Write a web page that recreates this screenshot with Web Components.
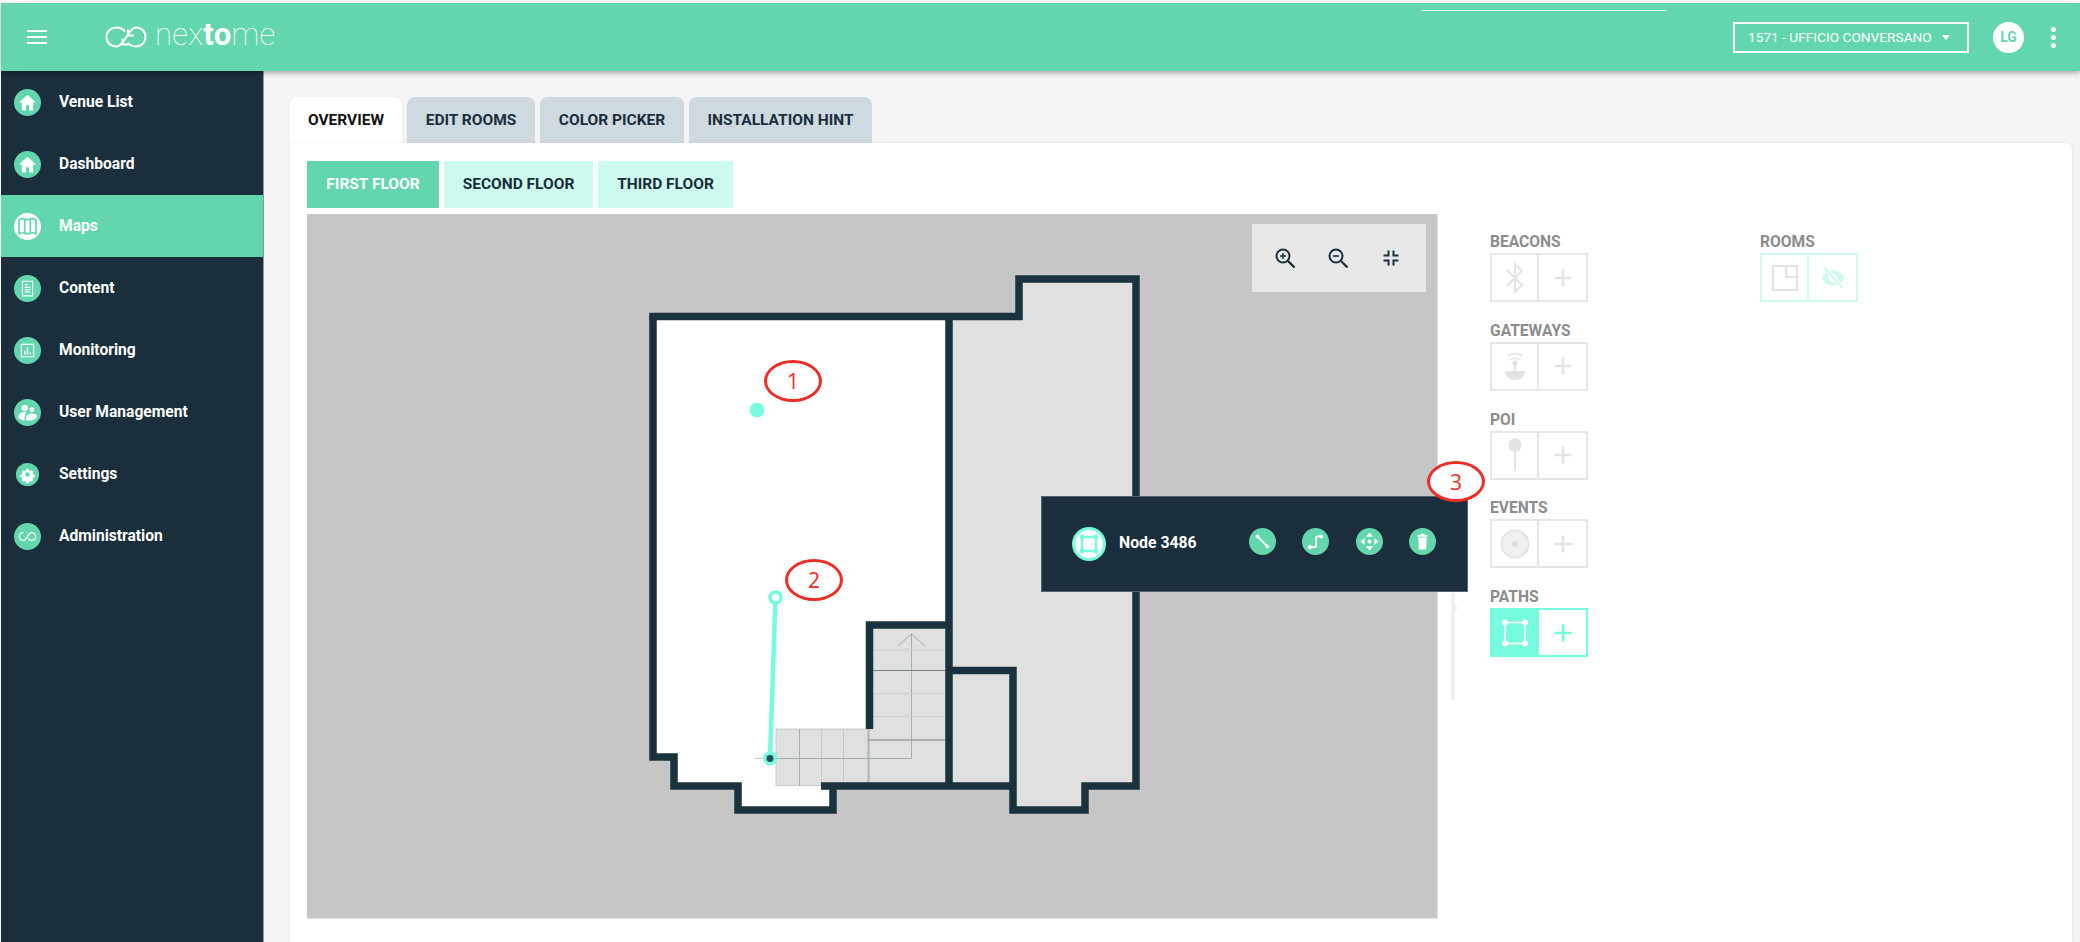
<!DOCTYPE html>
<html>
<head>
<meta charset="utf-8">
<title>Nextome</title>
<style>
  html, body { margin: 0; height: 100%; background: #fff; overflow: hidden; }
  body { font-family: Roboto, "Liberation Sans", sans-serif; }
</style>
</head>
<body>
<nx-app></nx-app>

<script>
/* colours used all over the page */
const GREEN = "#63d6ad";
const DARK = "#1a2e3b";
const WALL = "#1a323d";
const AQUA = "#76fbdf";

/* white glyphs for the round buttons, all in a 24x24 box */
const GLYPHS = {
  home: '<path d="M12 5 4.5 12H7v7h3.6v-4.6h2.8V19H17v-7h2.5z" fill="#fff"/>',
  maps: '<path d="M4.5 6c2.500-1.200 4.700-1.200 6 0 1-.6 2-.6 3 0 1.300-1.200 3.500-1.200 6 0v12.500c-2.500-1.200-4.700-1.200-6 0-1-.6-2-.6-3 0-1.300-1.200-3.500-1.200-6 0z" fill="none" stroke="currentColor" stroke-width="1.500"/><path d="M9.500 6v12M14.500 6v12" stroke="currentColor" stroke-width="1.500"/>',
  content: '<path d="M7.5 5.5h9v13h-9z" fill="none" stroke="#fff" stroke-width="1"/><path d="M9.5 8.5h3M9.500 11h5M9.500 13h5M9.500 15h5" stroke="#fff" stroke-width="1"/>',
  monitoring: '<path d="M6.5 6.5h11v11h-11z" fill="none" stroke="#fff" stroke-width="1"/><path d="M9.500 12v3.500M12 9v6.500M14.500 13.500v2" stroke="#fff" stroke-width="1.300"/>',
  users: '<circle cx="9.500" cy="8" r="2.800" fill="#fff"/><circle cx="16" cy="9.500" r="2.200" fill="#fff"/><path d="M3.800 16c0-2.800 2.600-4.500 5.400-4.500.9 0 1.700.2 2.400.5-1.400 1-2.200 2.500-2.200 4.500v2.800c-2.700-.3-4.800-1.200-5.600-2.800z" fill="#fff"/><path d="M10.700 19v-2.500c0-2.200 2.400-3.700 5.300-3.700s4.600 1 4.600 2.700c-1 1.900-2.800 3.200-5 3.700z" fill="#fff"/>',
  gear: '<path d="M10.500 4.500h3l.5 2.200 1.500.7 2-1.100 2.100 2.100-1.100 2 .7 1.500 2.200.5v3l-2.200.5-.7 1.500 1.100 2-2.100 2.100-2-1.100-1.500.7-.5 2.200h-3l-.5-2.200-1.500-.7-2 1.100-2.100-2.100 1.100-2-.7-1.500-2.200-.5v-3l2.200-.5.700-1.500-1.100-2 2.100-2.100 2 1.100 1.500-.7z" fill="#fff" transform="translate(2.400 2.400) scale(.8)"/><circle cx="12" cy="12" r="2.400" fill="#63d6ad"/>',
  loop: '<path d="M8.500 8.500c-2.200 0-3.700 1.600-3.700 3.500s1.500 3.500 3.700 3.500c3 0 4-7 7-7 2.200 0 3.700 1.600 3.700 3.500s-1.500 3.500-3.700 3.500c-1.300 0-2.300-.8-3-1.800" fill="none" stroke="#fff" stroke-width="1.100"/>',
  line: '<path d="M7.500 7.500l9 9" stroke="#fff" stroke-width="1.600"/><circle cx="7.500" cy="7.500" r="1.700" fill="#fff"/><circle cx="16.500" cy="16.500" r="1.700" fill="#fff"/>',
  route: '<path d="M7.500 17H11c1 0 1.500-.5 1.500-1.500V9c0-1 .5-1.500 1.500-1.500h3" fill="none" stroke="#fff" stroke-width="1.600"/><circle cx="7" cy="17" r="1.800" fill="#fff"/><circle cx="17" cy="7.500" r="1.800" fill="#fff"/>',
  move: '<path d="M12 4l3.200 3.700H8.800zM12 20l-3.200-3.700h6.400zM4 12l3.700-3.200v6.400zM20 12l-3.700 3.200V8.800z" fill="#fff"/><circle cx="12" cy="12" r="1.800" fill="#fff"/>',
  trash: '<path d="M8.200 8.500h7.600l-.5 10.500H8.700zM7.500 6.300h9v1.400h-9zM10.200 5.200h3.600v1h-3.600z" fill="#fff"/>'
};

/* the nextome loop mark in the header */
const LOOP_MARK = `<svg width="42" height="22" viewBox="0 0 42 22" fill="none" stroke="#fff" stroke-width="2">
  <path d="M20 5.500C18 3 15 1.500 11.500 1.500 5.500 1.500 1.500 5.500 1.500 11s4 9.500 10 9.500c8 0 12-19 19.500-19 5.500 0 9.500 4 9.500 9.500s-4 9.500-9.500 9.500c-3.500 0-6.500-1.500-8.500-4"/>
  <path d="M17.500 12.500v6h6M23 3.500v6h6" stroke-width="2"/>
</svg>`;

class NxHeader extends HTMLElement {
  constructor() {
    super();
    this.attachShadow({ mode: "open" }).innerHTML = `
    <style>
      :host { display: flex; align-items: center; height: 68px; background: ${GREEN}; position: relative; z-index: 2;
              box-shadow: 0 2px 5px rgba(0,0,0,.32); color: #fff; }
      .burger { width: 20px; margin-left: 26px; display: flex; flex-direction: column; gap: 4px; }
      .burger i { display: block; height: 2px; background: #fff; }
      .logo { display: flex; align-items: center; margin-left: 58px; }
      .word { font: 100 31px/1 Roboto, sans-serif; margin-left: 8px; position: relative; top: -3px; letter-spacing: .3px; }
      .word b { font-weight: 700; }
      .stripe { position: absolute; left: 1420px; top: 7px; width: 246px; height: 1px; background: #eafaf4; }
      .right { margin-left: auto; display: flex; align-items: center; }
      .venue { width: 236px; height: 31px; box-sizing: border-box; border: 2px solid #fff; display: flex; align-items: center;
               padding-left: 13px; font: 400 13.7px Roboto, sans-serif; white-space: nowrap; }
      .venue i { width: 0; height: 0; margin-left: 10px; border: 4.5px solid transparent; border-top: 5px solid #fff; border-bottom: 0; }
      .avatar { width: 31px; height: 31px; margin-left: 24px; border-radius: 50%; background: #fff; color: ${GREEN};
                display: flex; align-items: center; justify-content: center; font: 700 14px Roboto, sans-serif; }
      .more { margin: 0 24px 0 27px; display: flex; flex-direction: column; gap: 3px; }
      .more i { width: 5px; height: 5px; border-radius: 50%; background: #fff; }
    </style>
    <div class="burger"><i></i><i></i><i></i></div>
    <div class="logo">${LOOP_MARK}<span class="word">nex<b>to</b>me</span></div>
    <div class="stripe"></div>
    <div class="right">
      <div class="venue">1571 - UFFICIO CONVERSANO<i></i></div>
      <div class="avatar">LG</div>
      <div class="more"><i></i><i></i><i></i></div>
    </div>`;
  }
}
customElements.define("nx-header", NxHeader);

class NxNavItem extends HTMLElement {
  connectedCallback() {
    if (this.shadowRoot) return;
    const small = this.hasAttribute("small");
    this.attachShadow({ mode: "open" }).innerHTML = `
    <style>
      :host { display: flex; align-items: center; height: 62px; color: #fff; font: 700 15.6px Roboto, sans-serif; }
      :host([active]) { background: ${GREEN}; }
      .dot { width: 27px; height: 27px; margin-left: 13px; border-radius: 50%; background: ${GREEN}; color: ${GREEN};
             display: flex; align-items: center; justify-content: center; flex: none; }
      .dot.small { transform: scale(.86); }
      :host([active]) .dot { background: #fff; }
      svg { width: 27px; height: 27px; }
      span { margin-left: 18px; }
    </style>
    <div class="dot ${small ? "small" : ""}"><svg viewBox="0 0 24 24">${GLYPHS[this.getAttribute("icon")]}</svg></div>
    <span><slot></slot></span>`;
  }
}
customElements.define("nx-nav-item", NxNavItem);

class NxSidebar extends HTMLElement {
  constructor() {
    super();
    this.attachShadow({ mode: "open" }).innerHTML = `
    <style>
      :host { display: block; width: 262px; flex: none; background: ${DARK}; border-right: 1px solid #8d9aa3; box-sizing: content-box; }
    </style>
    <slot></slot>`;
  }
}
customElements.define("nx-sidebar", NxSidebar);

class NxTab extends HTMLElement {
  constructor() {
    super();
    this.attachShadow({ mode: "open" }).innerHTML = `
    <style>
      :host { display: flex; align-items: center; justify-content: center; box-sizing: border-box; height: 46px;
              background: #cfd9e0; color: ${DARK}; border-radius: 8px 8px 0 0;
              font: 700 15.5px Roboto, sans-serif; white-space: nowrap; }
      :host([active]) { background: #fff; color: #111; }
    </style>
    <slot></slot>`;
  }
}
customElements.define("nx-tab", NxTab);

class NxFloor extends HTMLElement {
  constructor() {
    super();
    this.attachShadow({ mode: "open" }).innerHTML = `
    <style>
      :host { display: flex; align-items: center; justify-content: center; box-sizing: border-box; height: 47px; padding-bottom: 1px;
              background: #cdfaef; color: ${DARK}; font: 700 15.5px Roboto, sans-serif; white-space: nowrap; }
      :host([active]) { background: ${GREEN}; color: #fff; }
    </style>
    <slot></slot>`;
  }
}
customElements.define("nx-floor", NxFloor);

class NxCallout extends HTMLElement {
  constructor() {
    super();
    this.attachShadow({ mode: "open" }).innerHTML = `
    <style>
      :host { position: absolute; box-sizing: border-box; width: 58px; height: 42px; border: 3px solid #ee2d24; border-radius: 50%;
              display: flex; align-items: center; justify-content: center; color: #ee2d24; background: #fff;
              font: 400 21px "Open Sans", sans-serif; z-index: 5; }
      :host([clear]) { background: transparent; }
    </style>
    <slot></slot>`;
  }
}
customElements.define("nx-callout", NxCallout);

class NxMapControls extends HTMLElement {
  constructor() {
    super();
    const lens = (sign) => `<svg width="24" height="24" viewBox="0 0 24 24" fill="none" stroke="${DARK}">
      <circle cx="10" cy="10" r="6.5" stroke-width="2"/><path d="M15 15l6.5 6.500" stroke-width="2.400"/>${sign}</svg>`;
    this.attachShadow({ mode: "open" }).innerHTML = `
    <style>
      :host { position: absolute; left: 945px; top: 10px; width: 174px; height: 68px; background: #e8e8e8;
              display: flex; align-items: center; box-sizing: border-box; padding-left: 21px; }
      div { width: 53px; flex: none; display: flex; }
    </style>
    <div>${lens('<path d="M7 10h6M10 7v6" stroke-width="1.400"/>')}</div>
    <div>${lens('<path d="M7 10h6" stroke-width="1.600"/>')}</div>
    <div><svg width="24" height="24" viewBox="0 0 24 24" fill="none" stroke="${DARK}" stroke-width="2">
      <path d="M9.500 4.500v5h-5M14.500 4.500v5h5M9.500 19.500v-5h-5M14.500 19.500v-5h5"/></svg></div>`;
  }
}
customElements.define("nx-map-controls", NxMapControls);

class NxFloorPlan extends HTMLElement {
  constructor() {
    super();
    /* the viewBox starts at the map corner, so the numbers below read as page coordinates */
    this.attachShadow({ mode: "open" }).innerHTML = `
    <style>
      :host { position: absolute; left: 0; top: 0; width: 100%; height: 100%; display: block; }
      svg { display: block; }
    </style>
    <svg width="1130" height="704" viewBox="307 214 1130 704">
      <path d="M949 316H1019V279H1136V786H1085V810H1013V786H949Z" fill="#e0e0de"/>
      <path d="M653 316H949V625H870V729H776V786H831V810H738V786H674V757H653Z" fill="#fff"/>
      <rect x="870" y="625" width="79" height="160" fill="#e0e0de"/>
      <rect x="776" y="729" width="92" height="57" fill="#e0e0de"/>
      <g fill="none" stroke="#c4cacc" stroke-width="1">
        <path d="M776 729V786M776 729H868M776 785.5H825M821.5 729V786M843.5 729V786M755 758.5H776"/>
      </g>
      <g fill="none" stroke="#a4adb2" stroke-width="1">
        <path d="M799.5 729V786M868 729V786M776 758.5H911.5V634M898 646 911.5 634 925 646"/>
      </g>
      <path d="M873 650H945M873 693.5H945M873 716.5H945" stroke="#d0d2d1" fill="none"/>
      <path d="M873 670.5H945M868 740H945" stroke="#76838b" stroke-width="1.2" fill="none"/>
      <g fill="none" stroke="${WALL}" stroke-width="7.5">
        <path d="M649.2 316.500H1019V279H1136V786H1085V810H1013V670.500H949V786M949 316.500V786M1013 786H821M869.500 729V625H949M1013 810V786"/>
        <path d="M653 316.500V757H674V786H738V810H833V786"/>
      </g>
      <circle cx="757" cy="410" r="7.3" fill="${AQUA}"/>
      <path d="M775.5 597 770 758" stroke="${AQUA}" stroke-width="4.5"/>
      <circle cx="775.5" cy="597.5" r="5.5" fill="#fff" stroke="${AQUA}" stroke-width="3.5"/>
      <circle cx="770" cy="758.5" r="5.2" fill="#2b4a62" stroke="${AQUA}" stroke-width="3.5"/>
    </svg>`;
  }
}
customElements.define("nx-floor-plan", NxFloorPlan);

class NxRoundBtn extends HTMLElement {
  connectedCallback() {
    if (this.shadowRoot) return;
    this.attachShadow({ mode: "open" }).innerHTML = `
    <style>
      :host { display: flex; width: 27px; height: 27px; border-radius: 50%; background: ${GREEN}; flex: none; }
      svg { width: 27px; height: 27px; }
    </style>
    <svg viewBox="0 0 24 24">${GLYPHS[this.getAttribute("icon")]}</svg>`;
  }
}
customElements.define("nx-round-btn", NxRoundBtn);

class NxNodePopup extends HTMLElement {
  constructor() {
    super();
    this.attachShadow({ mode: "open" }).innerHTML = `
    <style>
      :host { position: absolute; left: 734px; top: 282px; width: 427px; height: 96px; box-sizing: border-box; background: ${DARK};
              border: 1px solid #56646e; display: flex; align-items: center; padding: 0 31px 6px 30px; color: #fff; z-index: 3; }
      .node { width: 34px; height: 34px; border-radius: 50%; background: #fff; border: 3px solid ${AQUA}; box-sizing: border-box;
              display: flex; align-items: center; justify-content: center; margin-top: 6px; flex: none; }
      .name { margin-left: 13px; font: 700 15.8px Roboto, sans-serif; white-space: nowrap; margin-top: 3px; }
      .tools { margin-left: auto; display: flex; gap: 26.5px; }
    </style>
    <div class="node"><svg width="22" height="22" viewBox="0 0 22 22" fill="none" stroke="${AQUA}" stroke-width="2.4">
      <rect x="4" y="4" width="14" height="14"/><g fill="${AQUA}" stroke="none"><circle cx="4" cy="4" r="2.4"/><circle cx="18" cy="4" r="2.4"/><circle cx="4" cy="18" r="2.4"/><circle cx="18" cy="18" r="2.4"/></g></svg></div>
    <div class="name">Node 3486</div>
    <div class="tools">
      <nx-round-btn icon="line"></nx-round-btn>
      <nx-round-btn icon="route"></nx-round-btn>
      <nx-round-btn icon="move"></nx-round-btn>
      <nx-round-btn icon="trash"></nx-round-btn>
    </div>`;
  }
}
customElements.define("nx-node-popup", NxNodePopup);

class NxToolGroup extends HTMLElement {
  connectedCallback() {
    if (this.shadowRoot) return;
    const kind = this.getAttribute("kind") || "idle";
    const colours = { idle: "#e6e6e6", rooms: "#cdfaef", on: AQUA };
    const line = colours[kind];
    this.attachShadow({ mode: "open" }).innerHTML = `
    <style>
      :host { display: block; width: 98px; }
      .label { font: 700 15.6px/16px Roboto, sans-serif; color: #8c8c8c; height: 16px; margin-bottom: 3px; white-space: nowrap; }
      .box { display: grid; grid-template-columns: 45px 1fr; height: 49px; box-sizing: border-box; border: 2px solid ${line}; }
      .cell { display: flex; align-items: center; justify-content: center; }
      .cell + .cell { border-left: 2px solid ${line}; }
      .on { background: ${line}; }
      .plus { stroke: ${kind === "on" ? AQUA : "#e3e3e3"}; stroke-width: 2.5; fill: none; }
    </style>
    <div class="label"><slot></slot></div>
    <div class="box">
      <div class="cell ${kind === "on" ? "on" : ""}"><slot name="icon"></slot></div>
      <div class="cell"><slot name="action"><svg width="20" height="20" viewBox="0 0 20 20"><path class="plus" d="M10 1.500v17M1.500 10h17"/></svg></slot></div>
    </div>`;
  }
}
customElements.define("nx-tool-group", NxToolGroup);

class NxOverview extends HTMLElement {
  constructor() {
    super();
    this.attachShadow({ mode: "open" }).innerHTML = `
    <style>
      :host { display: block; flex: 1; background: #fff; border-radius: 0 6px 0 0; padding: 18px 17px 0; box-shadow: 0 0 3px rgba(0,0,0,.08); position: relative; }
      .floors { display: grid; grid-template-columns: 132px 149px 135px; gap: 5px; justify-content: start; }
      .work { display: flex; margin-top: 6px; position: relative; }
      .map { position: relative; width: 1130px; height: 704px; background: #c6c6c6; flex: none; border-bottom: 1px solid #e4e4e4; border-right: 1px solid #e4e4e4; box-sizing: content-box; }
      .tools { display: grid; grid-template-columns: 270px 98px; margin-left: 52px; padding-top: 20px; }
      .col { display: flex; flex-direction: column; gap: 20.8px; }
      .rail { position: absolute; left: 1144px; top: 379px; width: 4px; height: 107px; background: #f0f0f0; }
      .rail::after { content: ""; position: absolute; left: 2px; top: 9px; border: 6px solid transparent; border-left: 5px solid #f0f0f0; border-right: 0; }
    </style>
    <div class="floors">
      <nx-floor active>FIRST FLOOR</nx-floor>
      <nx-floor>SECOND FLOOR</nx-floor>
      <nx-floor>THIRD FLOOR</nx-floor>
    </div>
    <div class="work">
      <div class="map">
        <nx-floor-plan></nx-floor-plan>
        <nx-map-controls></nx-map-controls>
        <nx-callout clear style="left:457px;top:146px">1</nx-callout>
        <nx-callout clear style="left:478px;top:345px">2</nx-callout>
      </div>
      <nx-node-popup></nx-node-popup>
      <nx-callout style="left:1120px;top:247px;height:41px">3</nx-callout>
      <div class="rail"></div>
      <div class="tools">
        <div class="col">
          <nx-tool-group>BEACONS
            <svg slot="icon" width="22" height="36" viewBox="0 0 22 36" fill="none" stroke="#e3e3e3" stroke-width="2"><path d="M3 10l15 15-7 7V4l7 7L3 26"/></svg>
          </nx-tool-group>
          <nx-tool-group>GATEWAYS
            <svg slot="icon" width="24" height="36" viewBox="0 0 24 36" fill="none" stroke="#e3e3e3" stroke-width="1.5"><path d="M4.500 8.500c4-4 11-4 15 0M7.500 12c2.500-2.500 6.500-2.500 9 0"/><circle cx="12" cy="15" r="1.800" fill="#e3e3e3"/><path d="M12 15v9" stroke-width="2"/><path d="M2 23h20c0 5-4 9-10 9S2 28 2 23z" fill="#e3e3e3" stroke="none"/></svg>
          </nx-tool-group>
          <nx-tool-group>POI
            <svg slot="icon" width="16" height="36" viewBox="0 0 16 36"><ellipse cx="8" cy="8" rx="6.5" ry="7" fill="#e3e3e3"/><path d="M8 12v22" stroke="#e3e3e3" stroke-width="2"/></svg>
          </nx-tool-group>
          <nx-tool-group>EVENTS
            <svg slot="icon" width="30" height="36" viewBox="0 0 30 36" fill="#f0f0f0" stroke="#e3e3e3" stroke-width="2"><circle cx="15" cy="18" r="13.5"/><circle cx="15" cy="18" r="3" fill="#dedede" stroke="none"/></svg>
          </nx-tool-group>
          <nx-tool-group kind="on">PATHS
            <svg slot="icon" width="28" height="30" viewBox="0 0 28 30" fill="none" stroke="#fff" stroke-width="1.6"><rect x="4" y="4.5" width="20" height="21"/><g fill="#fff" stroke="none"><circle cx="4" cy="4.5" r="3"/><circle cx="24" cy="4.5" r="3"/><circle cx="4" cy="25.5" r="3"/><circle cx="24" cy="25.5" r="3"/></g></svg>
          </nx-tool-group>
        </div>
        <div class="col">
          <nx-tool-group kind="rooms">ROOMS
            <svg slot="icon" width="28" height="28" viewBox="0 0 28 28" fill="none" stroke="#e3e3e3" stroke-width="2.2"><path d="M2 2h24v24H2zM15 2v11h11"/></svg>
            <svg slot="action" width="26" height="26" viewBox="0 0 24 24"><path d="M1.500 12C4 7 7.500 5 12 5s8 2 10.500 7c-2.500 5-6 7-10.500 7s-8-2-10.500-7z" fill="#cdfaef"/><circle cx="12" cy="12" r="4" fill="#fff"/><path d="M4 2.500 21 21" stroke="#fff" stroke-width="3.500"/><path d="M4 2.500 21 21" stroke="#cdfaef" stroke-width="1.800"/></svg>
          </nx-tool-group>
        </div>
      </div>
    </div>`;
  }
}
customElements.define("nx-overview", NxOverview);

class NxApp extends HTMLElement {
  constructor() {
    super();
    this.attachShadow({ mode: "open" }).innerHTML = `
    <style>
      :host { display: flex; flex-direction: column; height: 942px; box-sizing: border-box; padding: 3px 0 0 1px; overflow: hidden; }
      .body { flex: 1; display: flex; min-height: 0; }
      main { flex: 1; display: flex; flex-direction: column; background: #f4f4f4; padding: 26px 8px 0 26px; min-width: 0; }
      .tabs { display: grid; grid-template-columns: 112px 128px 144px 183px; gap: 5px; justify-content: start; }
    </style>
    <nx-header></nx-header>
    <div class="body">
      <nx-sidebar>
        <nx-nav-item icon="home">Venue List</nx-nav-item>
        <nx-nav-item icon="home">Dashboard</nx-nav-item>
        <nx-nav-item icon="maps" active>Maps</nx-nav-item>
        <nx-nav-item icon="content">Content</nx-nav-item>
        <nx-nav-item icon="monitoring">Monitoring</nx-nav-item>
        <nx-nav-item icon="users">User Management</nx-nav-item>
        <nx-nav-item icon="gear" small>Settings</nx-nav-item>
        <nx-nav-item icon="loop">Administration</nx-nav-item>
      </nx-sidebar>
      <main>
        <div class="tabs">
          <nx-tab active>OVERVIEW</nx-tab>
          <nx-tab>EDIT ROOMS</nx-tab>
          <nx-tab>COLOR PICKER</nx-tab>
          <nx-tab>INSTALLATION HINT</nx-tab>
        </div>
        <nx-overview></nx-overview>
      </main>
    </div>`;
  }
}
customElements.define("nx-app", NxApp);
</script>
</body>
</html>
